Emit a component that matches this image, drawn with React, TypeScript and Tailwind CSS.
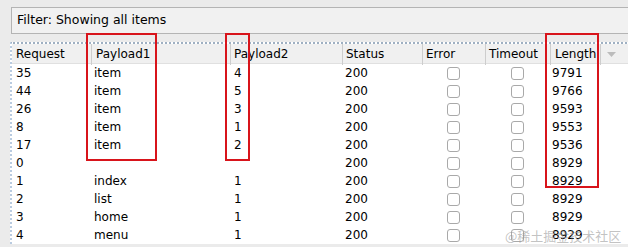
import React from 'react';

type Row = { req: string; p1: string; p2: string; status: string; len: string };

const ROWS: Row[] = [
  { req: '35', p1: 'item', p2: '4', status: '200', len: '9791' },
  { req: '44', p1: 'item', p2: '5', status: '200', len: '9766' },
  { req: '26', p1: 'item', p2: '3', status: '200', len: '9593' },
  { req: '8', p1: 'item', p2: '1', status: '200', len: '9553' },
  { req: '17', p1: 'item', p2: '2', status: '200', len: '9536' },
  { req: '0', p1: '', p2: '', status: '200', len: '8929' },
  { req: '1', p1: 'index', p2: '1', status: '200', len: '8929' },
  { req: '2', p1: 'list', p2: '1', status: '200', len: '8929' },
  { req: '3', p1: 'home', p2: '1', status: '200', len: '8929' },
  { req: '4', p1: 'menu', p2: '1', status: '200', len: '8929' },
];

const COLS = 'grid grid-cols-[79px_139px_112px_80px_63px_65px_50px_1fr]';

const Check = () => (
  <div className="flex items-center justify-center">
    <span className="block w-[13px] h-[13px] rounded-[3px] border border-[#a9a9a9] bg-white" />
  </div>
);

export default function App() {
  return (
    <div
      className="relative w-[628px] h-[247px] overflow-hidden bg-[#ebebeb] text-black"
      style={{ fontFamily: '"DejaVu Sans", sans-serif' }}
    >
      <div className="pt-[7px] pl-[11px]">
        <div className="h-[27px] w-[640px] border border-[#b4b4b4] bg-[#f1f1f1] flex items-center pl-[5px] text-[12.5px]">
          Filter: Showing all items
        </div>
      </div>

      <div className="mt-[8px] ml-[10px] w-[640px] border-t-2 border-l-2 border-t-[#9fb0c2] border-l-[#b9cbe0] border-dotted bg-white">
        <div className={`${COLS} h-[20px] bg-[#f0f0f0] text-[12px] leading-[21px] border-b border-[#e0e0e0]`}>
          <div className="pl-[4px]">Request</div>
          <div className="pl-[4px] border-l border-[#cdcdcd]">Payload1</div>
          <div className="pl-[3px] border-l border-[#cdcdcd]">Payload2</div>
          <div className="pl-[3px] border-l border-[#cdcdcd]">Status</div>
          <div className="pl-[3px] border-l border-[#cdcdcd]">Error</div>
          <div className="pl-[3px] border-l border-[#cdcdcd]">Timeout</div>
          <div className="pl-[4px] border-l border-[#cdcdcd]">Length</div>
          <div className="border-l border-[#cdcdcd] flex items-center pl-[6px]">
            <svg width="9" height="6" viewBox="0 0 9 6">
              <path d="M0 0 L9 0 L4.5 5 Z" fill="#bcbcbc" />
            </svg>
          </div>
        </div>
        {ROWS.map((r, i) => (
          <div key={i} className={`${COLS} h-[18px] text-[12px] leading-[19px]`}>
            <div className="pl-[4px]">{r.req}</div>
            <div className="pl-[3px]">{r.p1}</div>
            <div className="pl-[4px]">{r.p2}</div>
            <div className="pl-[3px]">{r.status}</div>
            <Check />
            <Check />
            <div className="pl-[2px]">{r.len}</div>
            <div />
          </div>
        ))}
      </div>

      {/* annotation boxes */}
      <div className="absolute left-[86px] top-[33px] w-[71px] h-[128px] border-2 border-[#d8141b]" />
      <div className="absolute left-[225px] top-[33px] w-[25px] h-[128px] border-2 border-[#d8141b]" />
      <div className="absolute left-[545px] top-[33px] w-[54px] h-[155px] border-2 border-[#d8141b]" />

      <div
        className="absolute left-[505px] top-[227px] text-[13px] leading-[18px] text-[#9a9a9a]/60 whitespace-nowrap"
        style={{ fontFamily: '"Noto Sans CJK SC", sans-serif' }}
      >
        @稀土掘金技术社区
      </div>
    </div>
  );
}
